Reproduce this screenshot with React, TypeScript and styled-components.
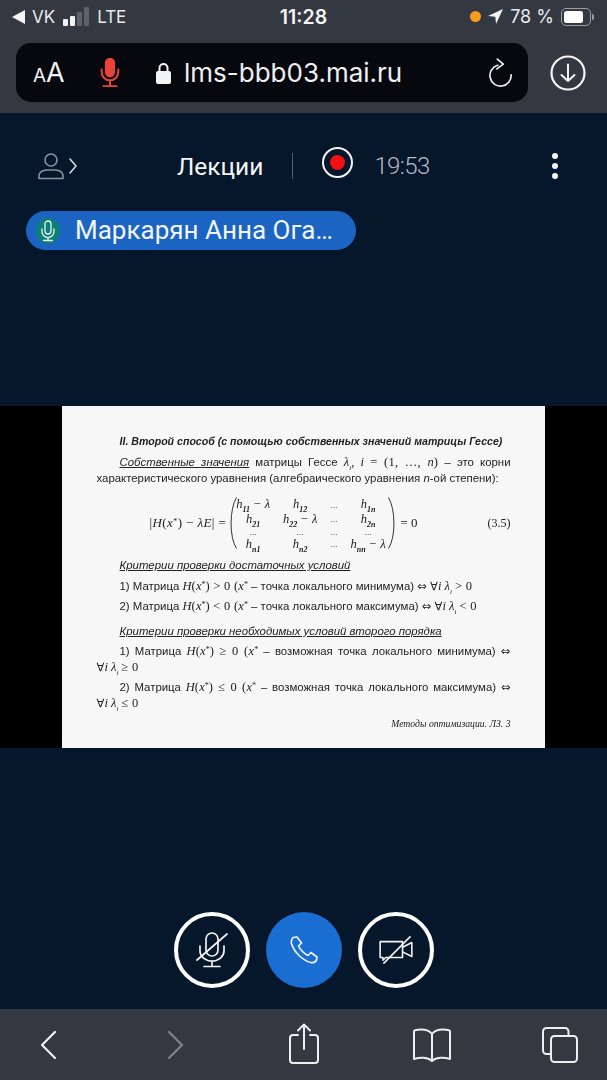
import React from 'react';
import styled, { createGlobalStyle } from 'styled-components';

const GlobalStyle = createGlobalStyle`
  html, body {
    margin: 0;
    padding: 0;
    background: #06172b;
  }
  #root {
    width: 607px;
    height: 1080px;
    overflow: hidden;
  }
`;

const Page = styled.div`
  width: 607px;
  height: 1080px;
  display: flex;
  flex-direction: column;
  background: #06172b;
  color: #fff;
  font-family: 'Roboto', 'Liberation Sans', sans-serif;
`;

const BrowserTop = styled.div`
  height: 113px;
  background: #333841;
  display: flex;
  flex-direction: column;
  flex: none;
`;

const StatusBar = styled.div`
  height: 33px;
  padding: 0 12px;
  display: grid;
  grid-template-columns: 1fr auto 1fr;
  align-items: center;
`;

const StatusGroup = styled.div<{ $end?: boolean }>`
  display: flex;
  align-items: center;
  gap: 7px;
  justify-content: ${(p) => (p.$end ? 'flex-end' : 'flex-start')};
  font-size: ${(p) => (p.$end ? 18 : 17)}px;
  font-family: 'Inter', 'Liberation Sans', sans-serif;
  color: #e9eaec;
`;

const Clock = styled.div`
  font-family: 'Inter', 'Liberation Sans', sans-serif;
  font-size: 19.5px;
  font-weight: 600;
  color: #f4f4f5;
`;

const Bars = styled.div`
  display: flex;
  align-items: flex-end;
  gap: 2px;
  height: 19px;
  margin: 0 1px;
`;

const Bar = styled.div<{ $h: number; $dim?: boolean }>`
  width: 5px;
  height: ${(p) => p.$h}px;
  border-radius: 1px;
  background: ${(p) => (p.$dim ? '#5c616a' : '#f2f2f3')};
`;

const OrangeDot = styled.div`
  width: 11px;
  height: 11px;
  border-radius: 50%;
  background: #f59d1b;
`;

const Battery = styled.div`
  width: 30px;
  height: 18px;
  box-sizing: border-box;
  border: 1px solid #9a9da3;
  border-radius: 5px;
  padding: 2px;
  margin-right: 4px;
  position: relative;
  &::before {
    content: '';
    display: block;
    width: 80%;
    height: 100%;
    background: #fff;
    border-radius: 2.5px;
  }
  &::after {
    content: '';
    position: absolute;
    right: -4px;
    top: 5px;
    width: 2px;
    height: 6px;
    background: #9a9da3;
    border-radius: 0 2px 2px 0;
  }
`;

const AddressRow = styled.div`
  display: flex;
  align-items: center;
  padding: 10px 0 0 16px;
`;

const AddressBar = styled.div`
  width: 512px;
  height: 59px;
  border-radius: 15px;
  background: #06080d;
  display: flex;
  align-items: center;
  padding: 0 0 0 17px;
  box-sizing: border-box;
`;

const TextSize = styled.div`
  font-family: 'Inter', 'Liberation Sans', sans-serif;
  color: #f1f1f1;
  width: 67px;
  font-size: 27px;
  line-height: 1;
  small {
    font-size: 19px;
  }
`;

const MicSlot = styled.div`
  display: flex;
  margin-right: 36px;
`;

const Host = styled.div`
  font-family: 'Inter', 'Liberation Sans', sans-serif;
  font-size: 26px;
  color: #eef0f2;
  margin-left: 13px;
`;

const ReloadSlot = styled.div`
  margin-left: auto;
  margin-right: 15px;
  display: flex;
`;

const DownloadSlot = styled.div`
  margin-left: 22px;
  display: flex;
`;

const Conference = styled.div`
  flex: 1;
  display: flex;
  flex-direction: column;
  min-height: 0;
`;

const MeetingHeader = styled.div`
  height: 98px;
  box-sizing: border-box;
  display: grid;
  grid-template-columns: 39px 1fr 30px;
  align-items: center;
  padding: 8px 49px 0 38px;
  flex: none;
`;

const UsersButton = styled.div`
  display: flex;
`;

const MeetingTitle = styled.div`
  display: flex;
  align-items: center;
  padding-left: 100px;
`;

const TitleText = styled.div`
  font-size: 24.5px;
  font-weight: 400;
  color: #f5f6f7;
`;

const Divider = styled.div`
  width: 1px;
  height: 26px;
  background: #53606e;
  margin: 0 29px 0 29px;
`;

const RecordRing = styled.div`
  width: 31px;
  height: 31px;
  box-sizing: border-box;
  border: 2px solid #f3f4f5;
  border-radius: 50%;
  display: flex;
  align-items: center;
  justify-content: center;
  margin-top: -8px;
  &::before {
    content: '';
    width: 15px;
    height: 15px;
    border-radius: 50%;
    background: #f40f14;
  }
`;

const Timer = styled.div`
  font-size: 24px;
  font-weight: 300;
  letter-spacing: -0.6px;
  color: #b3bac2;
  margin-left: 21px;
`;

const Kebab = styled.div`
  display: flex;
  flex-direction: column;
  gap: 4px;
  align-items: center;
  justify-self: end;
  width: 7px;
`;

const KebabDot = styled.div`
  width: 6px;
  height: 6px;
  border-radius: 50%;
  background: #f3f4f5;
`;

const TalkerRow = styled.div`
  padding: 0 0 0 26px;
  height: 195px;
  flex: none;
`;

const Talker = styled.div`
  width: 330px;
  height: 39px;
  box-sizing: border-box;
  background: #1b64c2;
  border-radius: 20px;
  display: flex;
  align-items: center;
  padding: 0 0 2px 10px;
  font-size: 26px;
  color: #f2f6fb;
`;

const TalkerIcon = styled.div`
  width: 24px;
  height: 26px;
  border-radius: 50%;
  background: #0e7f74;
  display: flex;
  align-items: center;
  justify-content: center;
  margin: 2px 15px 0 0;
  flex: none;
`;

const Stage = styled.div`
  height: 342px;
  background: #000;
  display: flex;
  justify-content: center;
  flex: none;
`;

const Slide = styled.div`
  width: 483px;
  height: 342px;
  margin-left: -1px;
  box-sizing: border-box;
  background: #f7f7f7;
  padding: 27px 34px 0 35px;
  color: #222;
  font-family: 'Liberation Sans', Arial, sans-serif;
  font-size: 11.4px;
  filter: blur(0.45px);
`;

const Line = styled.div<{ $h: number; $indent?: boolean; $justify?: boolean; $top?: number }>`
  height: ${(p) => p.$h}px;
  line-height: ${(p) => p.$h}px;
  margin-top: ${(p) => p.$top ?? 0}px;
  padding-left: ${(p) => (p.$indent ? 23 : 0)}px;
  text-align: ${(p) => (p.$justify ? 'justify' : 'left')};
  text-align-last: ${(p) => (p.$justify ? 'justify' : 'left')};
  white-space: ${(p) => (p.$justify ? 'normal' : 'nowrap')};
`;

const SlideHeading = styled.span`
  font-weight: 700;
  font-style: italic;
  font-size: 10.6px;
`;

const Underlined = styled.span`
  font-style: italic;
  text-decoration: underline;
  text-underline-offset: 1px;
`;

const M = styled.span`
  font-family: 'Liberation Serif', 'Times New Roman', serif;
  font-style: italic;
  font-size: 12.5px;
  sup {
    font-size: 8px;
    line-height: 0;
    font-style: normal;
    vertical-align: 3px;
  }
  sub {
    font-size: 7px;
    line-height: 0;
  }
`;

const Upright = styled.span`
  font-family: 'Liberation Serif', 'Times New Roman', serif;
  font-size: 12.5px;
  letter-spacing: 0.3px;
`;

const Sym = styled.span`
  font-family: 'DejaVu Sans', sans-serif;
  font-size: 11.5px;
`;

const EquationRow = styled.div`
  display: grid;
  grid-template-columns: 1fr auto;
  height: 58px;
  margin-top: 8px;
  padding-left: 53px;
  align-items: center;
  font-family: 'Liberation Serif', 'Times New Roman', serif;
  font-size: 13px;
`;

const Equation = styled.div`
  display: flex;
  align-items: center;
  white-space: nowrap;
  sup {
    font-size: 8px;
    line-height: 0;
    vertical-align: 3px;
  }
`;

const EquationLeft = styled.span`
  letter-spacing: 0.4px;
  margin-right: 2px;
`;

const Paren = styled.svg`
  width: 9px;
  height: 52px;
  flex: none;
`;

const Matrix = styled.div`
  display: grid;
  grid-template-columns: 42px 52px 16px 52px;
  grid-template-rows: 15px 14px 12px 12px;
  text-align: center;
  align-items: center;
  font-style: italic;
  font-size: 12.5px;
  line-height: 12px;
  margin: 0 -6px 0 -5px;
  white-space: nowrap;
  sub {
    font-size: 8px;
    font-weight: 700;
    line-height: 0;
  }
`;

const Dots = styled.span`
  font-size: 9px;
  font-style: normal;
`;

const EqNumber = styled.div`
  font-size: 12px;
`;

const Footnote = styled.div`
  margin-top: 3px;
  height: 16px;
  line-height: 16px;
  text-align: right;
  font-family: 'Liberation Serif', 'Times New Roman', serif;
  font-style: italic;
  font-size: 9.7px;
`;

const CallControls = styled.div`
  flex: 1;
  display: flex;
  justify-content: center;
  align-items: flex-start;
  gap: 16px;
  padding-top: 164px;
`;

const RoundButton = styled.div<{ $primary?: boolean }>`
  width: 76px;
  height: 76px;
  box-sizing: border-box;
  border-radius: 50%;
  background: ${(p) => (p.$primary ? '#1a6dd1' : 'transparent')};
  border: ${(p) => (p.$primary ? 'none' : '4px solid #fff')};
  display: flex;
  align-items: center;
  justify-content: center;
`;

const BrowserBottom = styled.div`
  height: 71px;
  background: #333841;
  flex: none;
  display: grid;
  grid-template-columns: repeat(5, 128px);
  justify-content: center;
  align-items: center;
`;

const ToolSlot = styled.div`
  display: flex;
  justify-content: center;
`;

const LocationArrow = () => (
  <svg width="15" height="15" viewBox="0 0 14 14">
    <path d="M14 0 L0 6.5 L6.8 7.2 L7.5 14 Z" fill="#f5f5f5" />
  </svg>
);

const CarrierArrow = () => (
  <svg width="13" height="14" viewBox="0 0 13 14">
    <path d="M13 0 V14 L0 7 Z" fill="#f5f5f5" />
  </svg>
);

const RedMic = () => (
  <svg width="20" height="29" viewBox="0 0 24 35" fill="none" stroke="#e8443a" strokeWidth="2.4" strokeLinecap="round">
    <rect x="7" y="1" width="10" height="21" rx="5" fill="#e8443a" />
    <path d="M2 14 V17 A10 10 0 0 0 22 17 V14" />
    <path d="M12 27 V33 M4 34 H20" />
  </svg>
);

const ThinMic = () => (
  <svg width="16" height="22" viewBox="0 0 16 22" fill="none" stroke="#e8f5f3" strokeWidth="1.3" strokeLinecap="round">
    <rect x="5" y="1" width="6" height="13" rx="3" />
    <path d="M2 9 V11.5 A6 6 0 0 0 14 11.5 V9 M8 17.5 V20 M3.5 20.5 H12.5" />
  </svg>
);

const Lock = () => (
  <svg width="15" height="22" viewBox="0 0 15 22" fill="none">
    <path d="M3.5 10 V6 A4 4 0 0 1 11.5 6 V10" stroke="#f4f4f4" strokeWidth="2" />
    <rect x="0" y="9" width="15" height="13" rx="2" fill="#f4f4f4" />
  </svg>
);

const Reload = () => (
  <svg width="24" height="29" viewBox="0 0 26 31" fill="none" stroke="#f1f1f1" strokeWidth="1.8" strokeLinecap="round" strokeLinejoin="round">
    <path d="M9.5 7.6 A11.5 11.5 0 1 0 24 18" />
    <path d="M9 1 L15.5 6.5 L8.5 11.5" />
  </svg>
);

const Download = () => (
  <svg width="36" height="36" viewBox="0 0 36 36" fill="none" stroke="#f5f5f5" strokeLinecap="round" strokeLinejoin="round">
    <circle cx="18" cy="18" r="16.5" strokeWidth="2.2" />
    <path d="M18 9.5 V26 M11.5 20 L18 26 L24.5 20" strokeWidth="2" />
  </svg>
);

const UserArrow = () => (
  <svg width="39" height="27" viewBox="0 0 39 27" fill="none" stroke="#8b939c" strokeWidth="1.6" strokeLinecap="round" strokeLinejoin="round">
    <circle cx="13" cy="7" r="6" />
    <path d="M1 25.5 V23 Q1 18 8 17 H18 Q25 18 25 23 V25.5 Z" />
    <path d="M32 6 L38 13 L32 20" stroke="#d3d7db" />
  </svg>
);

const MutedMic = () => (
  <svg width="32" height="36" viewBox="0 0 32 36" fill="none" stroke="#f1f3f5" strokeWidth="1.7" strokeLinecap="round">
    <rect x="10" y="1" width="12" height="23" rx="6" />
    <path d="M4 14 V19 A12 10 0 0 0 28 19 V14 M16 29 V34 M8 34.5 H24" />
    <path d="M1 28 L31 2" />
  </svg>
);

const Phone = () => (
  <svg width="28" height="28" viewBox="0 0 28 28" fill="none" stroke="#eaf3fd" strokeWidth="1.7" strokeLinejoin="round">
    <path d="M3 1.5 L7 1 L11.5 7 L8.5 10 C10 13.5 14.5 18 18 19.5 L21 16.5 L27 21 L26.5 24 C25.5 26 23 27 20.5 26.5 C12 24 4 16 1.5 7.5 C1 5 1.5 3 3 1.5 Z" />
  </svg>
);

const MutedCamera = () => (
  <svg width="34" height="28" viewBox="0 0 36 30" fill="none" stroke="#f1f3f5" strokeWidth="1.7" strokeLinecap="round" strokeLinejoin="round">
    <path d="M1 6 H25 V23 H7 L4 26 V23 H1 Z" />
    <path d="M25 12 L35 7 V22 L25 17" />
    <path d="M5 29 L33 1" />
  </svg>
);

const Chevron = ({ d, color }: { d: string; color: string }) => (
  <svg width="18" height="30" viewBox="0 0 18 30" fill="none" stroke={color} strokeWidth="2.2" strokeLinecap="round" strokeLinejoin="round">
    <path d={d} />
  </svg>
);

const Share = () => (
  <svg width="30" height="44" viewBox="0 0 30 44" fill="none" stroke="#eceef0" strokeWidth="2" strokeLinecap="round" strokeLinejoin="round">
    <path d="M9 12 H4 A3 3 0 0 0 1 15 V37 A3 3 0 0 0 4 40 H26 A3 3 0 0 0 29 37 V15 A3 3 0 0 0 26 12 H21" />
    <path d="M15 26 V1.5 M9 7.5 L15 1.5 L21 7.5" />
  </svg>
);

const Book = () => (
  <svg width="38" height="34" viewBox="0 0 38 34" fill="none" stroke="#eceef0" strokeWidth="2" strokeLinecap="round" strokeLinejoin="round">
    <path d="M19 6 C16 2 10 1 3 2 Q1 2 1 4 V31 C7 29 15 29 19 33 C23 29 31 29 37 31 V4 Q37 2 35 2 C28 1 22 2 19 6 Z" />
    <path d="M19 6 V33" />
  </svg>
);

const Tabs = () => (
  <svg width="36" height="36" viewBox="0 0 36 36" fill="none" stroke="#eceef0" strokeWidth="2" strokeLinejoin="round">
    <path d="M9 27 H4.5 A3.5 3.5 0 0 1 1 23.5 V4.5 A3.5 3.5 0 0 1 4.5 1 H23 A3.5 3.5 0 0 1 26.5 4.5 V9" />
    <rect x="9" y="9" width="26" height="26" rx="3.5" />
  </svg>
);

const matrix: [string, string?][] = [
  ['h', '11'], ['h', '12'], ['…'], ['h', '1n'],
  ['h', '21'], ['h', '22'], ['…'], ['h', '2n'],
  ['…'], ['…'], ['…'], ['…'],
  ['h', 'n1'], ['h', 'n2'], ['…'], ['h', 'nn'],
];

const minusLambda = ['11', '22', 'nn'];

const Xs = () => (
  <M>
    x<sup>*</sup>
  </M>
);

const Hx = () => (
  <>
    <M>H</M>
    <Upright>(</Upright>
    <Xs />
    <Upright>)</Upright>
  </>
);

const ForAll = ({ rel }: { rel: string }) => (
  <>
    <Sym>∀</Sym>
    <M>
      i λ<sub>i</sub>
    </M>{' '}
    <Upright>{rel} 0</Upright>
  </>
);

function App() {
  return (
    <Page>
      <GlobalStyle />
      <BrowserTop>
        <StatusBar>
          <StatusGroup>
            <CarrierArrow />
            <span>VK</span>
            <Bars>
              <Bar $h={7} />
              <Bar $h={10} />
              <Bar $h={14} $dim />
              <Bar $h={19} $dim />
            </Bars>
            <span>LTE</span>
          </StatusGroup>
          <Clock>11:28</Clock>
          <StatusGroup $end>
            <OrangeDot />
            <LocationArrow />
            <span>78 %</span>
            <Battery />
          </StatusGroup>
        </StatusBar>
        <AddressRow>
          <AddressBar>
            <TextSize>
              <small>A</small>A
            </TextSize>
            <MicSlot>
              <RedMic />
            </MicSlot>
            <Lock />
            <Host>lms-bbb03.mai.ru</Host>
            <ReloadSlot>
              <Reload />
            </ReloadSlot>
          </AddressBar>
          <DownloadSlot>
            <Download />
          </DownloadSlot>
        </AddressRow>
      </BrowserTop>

      <Conference>
        <MeetingHeader>
          <UsersButton>
            <UserArrow />
          </UsersButton>
          <MeetingTitle>
            <TitleText>Лекции</TitleText>
            <Divider />
            <RecordRing />
            <Timer>19:53</Timer>
          </MeetingTitle>
          <Kebab>
            <KebabDot />
            <KebabDot />
            <KebabDot />
          </Kebab>
        </MeetingHeader>

        <TalkerRow>
          <Talker>
            <TalkerIcon>
              <ThinMic />
            </TalkerIcon>
            Маркарян Анна Ога…
          </Talker>
        </TalkerRow>

        <Stage>
          <Slide>
            <Line $h={16} $indent>
              <SlideHeading>II. Второй способ (с помощью собственных значений матрицы Гессе)</SlideHeading>
            </Line>
            <Line $h={16} $top={5} $indent $justify>
              <Underlined>Собственные значения</Underlined> матрицы Гессе{' '}
              <M>
                λ<sub>i</sub>,
              </M>{' '}
              <M>i</M> <Upright>= (1, …, </Upright>
              <M>n</M>
              <Upright>)</Upright> – это корни
            </Line>
            <Line $h={16}>
              характеристического уравнения (алгебраического уравнения <i>n</i>-ой степени):
            </Line>
            <EquationRow>
              <Equation>
                <EquationLeft>
                  |<i>H</i>(<i>x</i>
                  <sup>*</sup>) − <i>λE</i>| =
                </EquationLeft>
                <Paren viewBox="0 0 9 52" fill="none" stroke="#333" strokeWidth="1">
                  <path d="M8.5 0.5 C1.5 12 1 40 8.5 51.5" />
                </Paren>
                <Matrix>
                  {matrix.map(([base, sub], i) => (
                    <div key={i}>
                      {sub ? base : <Dots>...</Dots>}
                      {sub && <sub>{sub}</sub>}
                      {sub && minusLambda.includes(sub) && ' − λ'}
                    </div>
                  ))}
                </Matrix>
                <Paren viewBox="0 0 9 52" fill="none" stroke="#333" strokeWidth="1">
                  <path d="M0.5 0.5 C7.5 12 8 40 0.5 51.5" />
                </Paren>
                <span>&nbsp;= 0</span>
              </Equation>
              <EqNumber>(3.5)</EqNumber>
            </EquationRow>
            <Line $h={16} $indent $top={5}>
              <Underlined>Критерии проверки достаточных условий</Underlined>
            </Line>
            <Line $h={20} $indent $top={3}>
              1) Матрица <Hx /> <Upright>&gt; 0 (</Upright>
              <Xs /> – точка локального минимума) <Sym>⇔</Sym> <ForAll rel=">" />
            </Line>
            <Line $h={20} $indent>
              2) Матрица <Hx /> <Upright>&lt; 0 (</Upright>
              <Xs /> – точка локального максимума) <Sym>⇔</Sym> <ForAll rel="<" />
            </Line>
            <Line $h={20} $indent $top={5}>
              <Underlined>Критерии проверки необходимых условий второго порядка</Underlined>
            </Line>
            <Line $h={20} $indent $justify>
              1) Матрица <Hx /> <Upright>≥ 0 (</Upright>
              <Xs /> – возможная точка локального минимума) <Sym>⇔</Sym>
            </Line>
            <Line $h={20} $top={-4}>
              <ForAll rel="≥" />
            </Line>
            <Line $h={20} $indent $justify>
              2) Матрица <Hx /> <Upright>≤ 0 (</Upright>
              <Xs /> – возможная точка локального максимума) <Sym>⇔</Sym>
            </Line>
            <Line $h={20} $top={-4}>
              <ForAll rel="≤" />
            </Line>
            <Footnote>Методы оптимизации. ЛЗ. 3</Footnote>
          </Slide>
        </Stage>

        <CallControls>
          <RoundButton>
            <MutedMic />
          </RoundButton>
          <RoundButton $primary>
            <Phone />
          </RoundButton>
          <RoundButton>
            <MutedCamera />
          </RoundButton>
        </CallControls>
      </Conference>

      <BrowserBottom>
        <ToolSlot>
          <Chevron d="M16 2 L3 15 L16 28" color="#f2f3f4" />
        </ToolSlot>
        <ToolSlot>
          <Chevron d="M2 2 L15 15 L2 28" color="#7e838a" />
        </ToolSlot>
        <ToolSlot>
          <Share />
        </ToolSlot>
        <ToolSlot>
          <Book />
        </ToolSlot>
        <ToolSlot>
          <Tabs />
        </ToolSlot>
      </BrowserBottom>
    </Page>
  );
}

export default App;
